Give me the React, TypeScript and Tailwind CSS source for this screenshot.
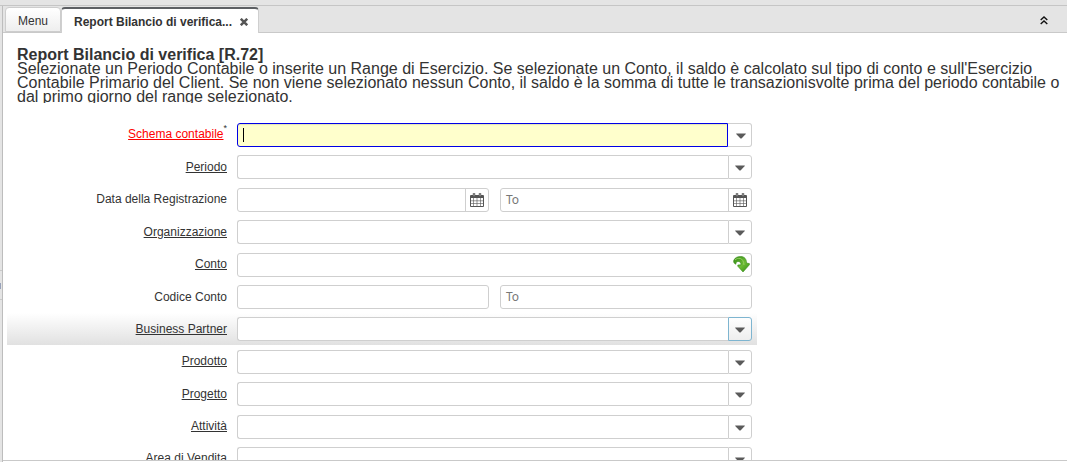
import React from 'react';

const Caret = () => (
  <svg width="10" height="6" viewBox="0 0 10 6" className="mt-[2px] shrink-0" fill="#5a5a5a"><path d="M.2.4h9.600v.7L5.500 5.400h-1L.2 1.100z" /></svg>
);

const Calendar = () => (
  <svg width="14" height="14" viewBox="0 0 14 14" className="shrink-0" fill="none" stroke="#555">
    <path d="M1 2h12v3H1z" fill="#555" stroke="none" />
    <path d="M.5 13.500V2.500h13v11z" strokeWidth="1" />
    <path d="M3.500 5v8M7 5v8M10.500 5v8M1 7.800h12M1 10.500h12" strokeWidth=".6" />
    <path d="M4 .3v3M10 .3v3" strokeWidth="2.400" />
    <path d="M4 1v2.200M10 1v2.200" stroke="#bbb" strokeWidth=".8" />
  </svg>
);

const Refresh = () => (
  <svg width="17" height="17" viewBox="0 0 17 17">
    <defs>
      <linearGradient id="leaf" x1="0" y1="0" x2="1" y2="1">
        <stop offset="0" stopColor="#2f8a12" />
        <stop offset=".55" stopColor="#6dbb36" />
        <stop offset="1" stopColor="#2f8d10" />
      </linearGradient>
    </defs>
    <path d="M.7 4.500C2 1.500 4.500.5 7.500.5c4 0 6 2.500 6 6.500l2.900.6v1.200L10 16 4.800 10.200V9L8 8.800C8.200 6.500 6.500 5 4.800 5.500c-1.500.4-2 1.500-1.800 2.700C1.200 7.800.3 6.200.7 4.500z" fill="url(#leaf)" stroke="#35891a" strokeWidth=".6" />
    <path d="M2 4C4.500 1.500 10.500.8 11 9" fill="none" stroke="#95cf62" strokeWidth="1" />
  </svg>
);

type Kind = 'combo' | 'dates' | 'search' | 'range';
type Row = { label: string; kind: Kind; link?: boolean; required?: boolean; hover?: boolean };

const rows: Row[] = [
  { label: 'Schema contabile', kind: 'combo', link: true, required: true },
  { label: 'Periodo', kind: 'combo', link: true },
  { label: 'Data della Registrazione', kind: 'dates' },
  { label: 'Organizzazione', kind: 'combo', link: true },
  { label: 'Conto', kind: 'search', link: true },
  { label: 'Codice Conto', kind: 'range' },
  { label: 'Business Partner', kind: 'combo', link: true, hover: true },
  { label: 'Prodotto', kind: 'combo', link: true },
  { label: 'Progetto', kind: 'combo', link: true },
  { label: 'Attività', kind: 'combo', link: true },
  { label: 'Area di Vendita', kind: 'combo', link: true },
];

function Combo({ active, hover }: { active?: boolean; hover?: boolean }) {
  return (
    <div className="flex h-6 w-[515px]">
      <div className={`flex h-6 w-[491px] items-center rounded-l-[3px] border pl-[5px] ${active ? 'border-[#0000e6] bg-[#ffffcc] shadow-[inset_0_1px_1px_#e5e5b8]' : 'border-[#cfcfcf] border-r-0 bg-white'}`}>
        {active && <span className="h-[14px] w-px bg-black" />}
      </div>
      <div className={`flex h-6 w-6 items-center justify-center rounded-r-[3px] border ${active ? 'border-l-0 border-[#cfcfcf] bg-white pl-[2px]' : hover ? 'border-[#7eb5d0] bg-linear-to-b from-[#fefefe] to-[#eee]' : 'border-[#cfcfcf] bg-white'}`}>
        <Caret />
      </div>
    </div>
  );
}

function Field({ date, to }: { date?: boolean; to?: boolean }) {
  return (
    <div className="flex h-6 w-[252px] overflow-hidden rounded-[3px] border border-[#cfcfcf] bg-white">
      <div className="flex-1 pl-[5px] font-['Noto_Sans',sans-serif] text-[12px] leading-[22px] text-[#777]">{to && 'To'}</div>
      {date && <div className="flex w-[23px] items-center justify-center border-l border-[#cfcfcf]"><Calendar /></div>}
    </div>
  );
}

function FormRow({ label, kind, link, required, hover }: Row) {
  return (
    <div className={`flex h-[32.4px] w-[750px] shrink-0 pt-[4.8px] ${hover ? 'bg-linear-to-b from-white to-[#e1e1e1]' : ''}`}>
      <div className={`flex w-[230px] justify-end pr-[10px] text-[12px] leading-[22px] ${required ? '' : 'pt-[0.6px]'}`}>
        <span className={`${link ? 'underline' : ''} ${required ? 'text-[#f00]' : ''}`}>{label}</span>
        {required && <span className="-mt-1.5 text-[9px] leading-[22px]">*</span>}
      </div>
      {kind === 'combo' && <Combo active={required} hover={hover} />}
      {(kind === 'dates' || kind === 'range') && (
        <div className="flex gap-[11px]"><Field date={kind === 'dates'} /><Field date={kind === 'dates'} to /></div>
      )}
      {kind === 'search' && (
        <div className="flex h-6 w-[515px] items-start justify-end rounded-[3px] border border-[#cfcfcf] bg-white pr-[1px] pt-[2px]"><Refresh /></div>
      )}
    </div>
  );
}

export default function App() {
  return (
    <div className="flex h-[462px] w-[1067px] flex-col overflow-hidden bg-[#e4e4e4] font-['Liberation_Sans',Arial,sans-serif] text-[#333]">
      <div className="h-[6px] shrink-0 border-b border-[#c5c5c5]" />
      <div className="flex min-h-0 flex-1">
        <div className="flex w-[3px] flex-col border-r border-[#bdbdbd] pt-[264px]">
          <div className="h-[30px] border-y border-[#c9c9c9] pt-[12px]"><div className="h-[6px] w-px bg-[#98a2ba]" /></div>
        </div>
        <div className="flex min-w-0 flex-1 flex-col">
          <div className="flex h-[27px] shrink-0 border-b border-[#c9c9c9]">
            <div className="ml-[2px] mt-[1px] h-[25px] w-[56px] rounded-t-[4px] border border-[#cdcdcd] bg-linear-to-b from-white to-[#eee] text-center text-[12px] leading-[26px]">Menu</div>
            <div className="z-10 mt-px flex h-[26px] w-[198px] items-center rounded-t-[4px] border-x border-t-2 border-x-[#cfcfcf] border-t-[#5c5f63] bg-white pl-[12px] text-[12px] font-bold">
              <span className="mt-0.5 whitespace-nowrap">Report Bilancio di verifica...</span>
              <svg className="ml-[8px] mt-[2px]" width="8" height="8" viewBox="0 0 8 8" stroke="#555" strokeWidth="2.500"><path d="M.8.800l6.400 6.400M7.200.800L.8 7.200" /></svg>
            </div>
            <svg className="ml-auto mr-[19px] mt-[10px]" width="8" height="9" viewBox="0 0 8 9" fill="none" stroke="#111" strokeWidth="1.400"><path d="M.7 4L4 1l3.300 3M.7 8L4 5l3.300 3" /></svg>
          </div>
          <div className="flex min-h-0 flex-1 flex-col overflow-hidden border-b border-[#c9c9c9] bg-white">
            <div className="ml-[14px] mt-[14px] h-[56px] w-[1048px] shrink-0 overflow-hidden whitespace-nowrap pt-px text-[16px] leading-[14px]">
              <div className="font-bold">Report Bilancio di verifica [R.72]</div>
              <div>Selezionate un Periodo Contabile o inserite un Range di Esercizio. Se selezionate un Conto, il saldo è calcolato sul tipo di conto e sull'Esercizio</div>
              <div>Contabile Primario del Client. Se non viene selezionato nessun Conto, il saldo è la somma di tutte le transazionisvolte prima del periodo contabile o</div>
              <div>dal primo giorno del range selezionato.</div>
            </div>
            <div className="ml-[4px] mt-[15.2px] flex min-h-0 flex-1 flex-col">
              {rows.map((r) => <FormRow key={r.label} {...r} />)}
            </div>
          </div>
          <div className="h-px shrink-0 bg-white" />
        </div>
      </div>
    </div>
  );
}
